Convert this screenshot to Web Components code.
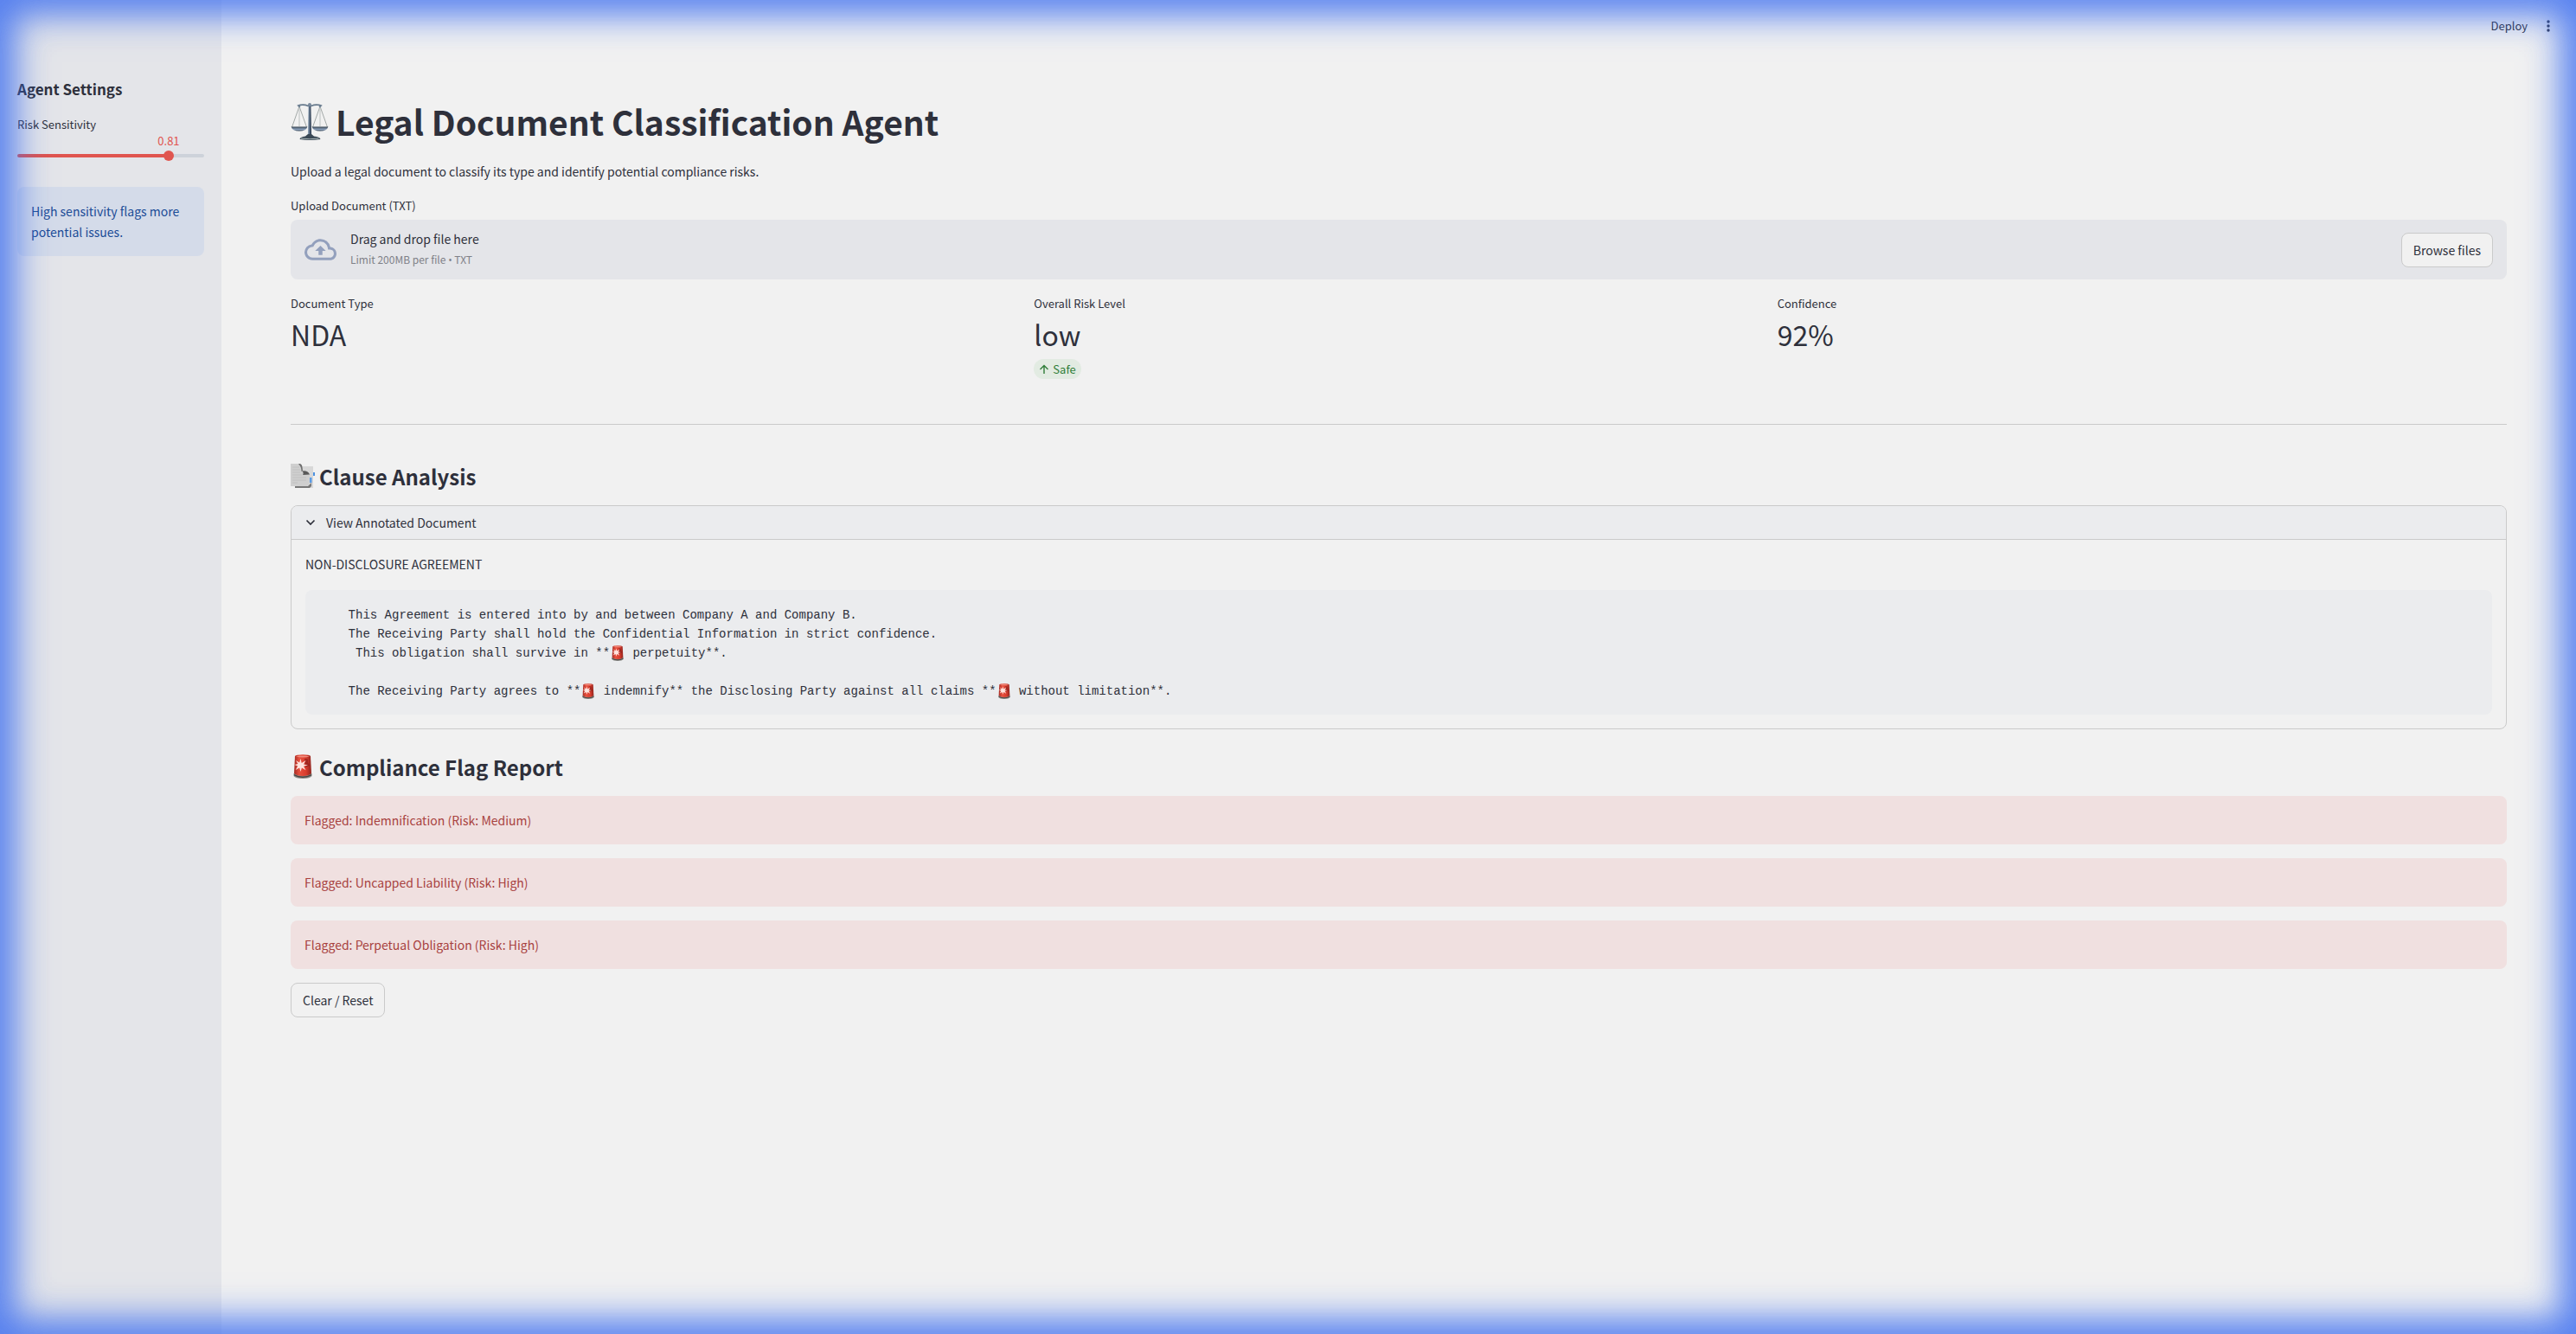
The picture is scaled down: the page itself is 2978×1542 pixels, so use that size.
<!DOCTYPE html>
<html lang="en">
<head>
<meta charset="utf-8">
<meta name="viewport" content="width=device-width, initial-scale=1">
<title>Legal Document Classification Agent</title>
<style>
  :root {
    --bg: #f1f1f1; --panel: #e4e5e9; --soft: #ebecee; --line: #cacaca;
    --ink: #2e303b; --muted: #7f8188; --red: #e0554f;
    --fs-small: 13px;
  }
  body { margin: 0; background: var(--bg); color: var(--ink);
    font: 14px/24px "Noto Sans CJK SC", "Noto Sans CJK JP", "Open Sans", sans-serif; }
  p { margin: 0 0 16px; }
</style>
</head>
<body>
<app-shell>
  <side-panel slot="side">
    <risk-slider label="Risk Sensitivity" value="0.81"></risk-slider>
    <alert-box kind="info">High sensitivity flags more potential issues.</alert-box>
  </side-panel>
  <tool-bar slot="tools"></tool-bar>
  <page-title>Legal Document Classification Agent</page-title>
  <p>Upload a legal document to classify its type and identify potential compliance risks.</p>
  <file-drop label="Upload Document (TXT)"></file-drop>
  <metric-row>
    <metric-card label="Document Type">NDA</metric-card>
    <metric-card label="Overall Risk Level" delta="Safe">low</metric-card>
    <metric-card label="Confidence">92%</metric-card>
  </metric-row>
  <section-title icon="pages">Clause Analysis</section-title>
  <clause-viewer label="View Annotated Document"></clause-viewer>
  <section-title icon="siren">Compliance Flag Report</section-title>
  <alert-list>
    <alert-box kind="error">Flagged: Indemnification (Risk: Medium)</alert-box>
    <alert-box kind="error">Flagged: Uncapped Liability (Risk: High)</alert-box>
    <alert-box kind="error">Flagged: Perpetual Obligation (Risk: High)</alert-box>
    <action-button>Clear / Reset</action-button>
  </alert-list>
</app-shell>

<script>
const define = (name, render) => customElements.define(name, class extends HTMLElement {
  connectedCallback() {
    if (this.shadowRoot) return;
    this.attachShadow({ mode: 'open' }).innerHTML = render(this);
  }
});

const PICTURES = {
  scales: `<svg viewBox="0 0 44 44" aria-hidden="true">
    <defs><linearGradient id="m" x1="0" x2="1"><stop offset="0" stop-color="#9fb2c4"/><stop offset=".5" stop-color="#50627a"/><stop offset="1" stop-color="#283546"/></linearGradient>
    <linearGradient id="p" x1="0" x2="0" y1="0" y2="1"><stop offset="0" stop-color="#34414f"/><stop offset=".6" stop-color="#8ba0bb"/><stop offset="1" stop-color="#3c4b5c"/></linearGradient></defs>
    <g fill="none" stroke="#9aa09f" stroke-width=".9"><path d="M10 5 1.500 29M10 5 18.500 29M34 5 25.500 29M34 5 42.500 29"/><path d="M10 5V28M34 5V28" stroke="#b7bcbc"/></g>
    <path d="M7.500 3.400Q15 1 20 3.500L22 2l2 1.500Q29 1 36.500 3.400L36 4.700Q29 3.200 24 5.200h-4Q15 3.200 8 4.700z" fill="#66798c"/>
    <circle cx="22" cy="3" r="2" fill="#7a8b9e"/><circle cx="10" cy="5" r="1.300" fill="#738596"/><circle cx="34" cy="5" r="1.300" fill="#738596"/>
    <path d="M20.600 5h2.800l.7 34h-4.200z" fill="url(#m)"/>
    <path d="M.6 28.500h18.800Q18 33.500 10 33.500T.6 28.500zM24.600 28.500h18.800Q42 33.500 34 33.500T24.600 28.500z" fill="url(#p)"/>
    <path d="M20 37h4l3 2.500q7 .5 7.500 3.500Q22 45 10.500 43q.5-3 6.500-3.500z" fill="#3a4855"/><path d="M12 42q10 1.500 20.500 0" stroke="#aab7b7" fill="none"/></svg>`,
  pages: `<svg viewBox="0 0 28 28" aria-hidden="true">
    <path d="M5 3h21v25H5z" fill="#d8d8d8"/><path d="M26 10h2v4h-2z" fill="#4d92e0"/><path d="M22 16h2.500v6H22z" fill="#5b9be4"/>
    <path d="M5 26h15l4-4v4l-2 2H5z" fill="#777"/>
    <path d="M0 0h11q2 1 2.500 5l.5 4q5-1 8 3v10l-3 4H0z" fill="#cfcfcf"/>
    <path d="M10 0q3 0 3.500 4l.5 4.500-1.500.5Q12.500 3 9 .5z" fill="#6f6f6f"/>
    <path d="M13.500 8.500q6-1 8.500 4-4 0-8 .5 1.500-2-.5-4.500z" fill="#595959"/>
    <path d="M2 4h8M2 7h9M2 10h9M2 13h11M2 16h16M2 19h16M2 22h6" stroke="#bdbdbd" stroke-width=".8"/></svg>`,
  siren: `<svg viewBox="0 0 22 28" aria-hidden="true">
    <defs><linearGradient id="s" x1="0" x2="1"><stop offset="0" stop-color="#a52b24"/><stop offset=".3" stop-color="#e8513f"/><stop offset=".7" stop-color="#d83c2d"/><stop offset="1" stop-color="#8f241e"/></linearGradient></defs>
    <path d="M.5 22h21v3q-2 3-10.500 3T.5 25z" fill="#8f8d88"/><path d="M1 23q10 5 20 0v1.500q-10 5-20 0z" fill="#4b4745"/>
    <path d="M2 2Q3 .2 11 .2T20 2l1 20q-3 3-10 3T1 22z" fill="url(#s)"/>
    <path d="M3 2.500Q11 .5 19 2.500 11 4.500 3 2.500z" fill="#ef8f80"/>
    <path d="M13 5q5-1 4 4l2 4-5 2z" fill="#8f1f1b" opacity=".7"/>
    <path d="m8.500 5 1.200 5 4.800-3-2.500 4.500 5 1-5 1.200 2.500 4.500-4.600-2.600L8.500 20l-1.300-4.500-4.400 2.400 2.400-4.300L1.500 12l4-1L3 7l4.200 2.600z" fill="#ffe4de"/></svg>`
};

define('app-shell', () => `<style>
  :host { display: grid; grid-template-columns: 256px minmax(0, 1fr); min-height: 100vh; }
  :host::after { content: ""; position: fixed; inset: 0; pointer-events: none; z-index: 9;
    box-shadow: inset 0 0 36px 16px rgba(60,110,240,.7), inset 0 0 60px rgba(60,110,240,.6); }
  main { padding: 32px 80px 80px; }
</style>
<slot name="side"></slot>
<div><slot name="tools"></slot><main><slot></slot></main></div>`);

define('side-panel', () => `<style>
  :host { display: block; background: var(--panel); padding: 87px 20px; }
  h2 { margin: 0 0 13px; font-size: 17px; line-height: 32px; font-weight: 600; }
</style>
<aside><h2>Agent Settings</h2><slot></slot></aside>`);

define('risk-slider', el => `<style>
  :host { display: block; margin-bottom: 34px; }
  label { display: block; font-size: var(--fs-small); }
  .scale { position: relative; height: 26px; display: flex; align-items: end; }
  output { position: absolute; left: 81%; top: 0; transform: translateX(-50%); font-size: var(--fs-small); line-height: 14px; color: var(--red); }
  .track { flex: 1; height: 4px; border-radius: 4px; display: flex; align-items: center;
    background: linear-gradient(to right, var(--red) 81%, #cdd2da 81%); }
  input { appearance: none; background: none; flex: none; width: calc(100% + 12px); height: 12px; margin: 0 -6px; }
  input::-webkit-slider-thumb { appearance: none; width: 12px; height: 12px; border-radius: 50%; background: var(--red); }
</style>
<label for="r">${el.getAttribute('label')}</label>
<div class="scale"><output for="r">${el.getAttribute('value')}</output>
<div class="track"><input id="r" type="range" min="0" max="1" step="0.01" value="${el.getAttribute('value')}"></div></div>`);

define('alert-box', () => `<style>
  :host { display: block; padding: 16px; border-radius: 8px; }
  :host([kind=info]) { background: #d4dbe9; color: #1b4c97; }
  :host([kind=error]) { background: #f0e0e0; color: #a8423f; }
</style><slot></slot>`);

define('tool-bar', () => `<style>
  :host { display: flex; justify-content: end; align-items: center; gap: 16px; height: 60px; padding-right: 24px; }
  button { border: 0; background: none; padding: 0; color: inherit; font: inherit; font-size: var(--fs-small); display: flex; }
  svg { width: 16px; height: 16px; }
</style>
<button>Deploy</button>
<button aria-label="Menu"><svg viewBox="0 0 16 16" fill="#2e303b"><circle cx="8" cy="3" r="1.700"/><circle cx="8" cy="8" r="1.700"/><circle cx="8" cy="13" r="1.700"/></svg></button>`);

define('page-title', () => `<style>
  :host { display: block; padding: 22px 0 20px; }
  h1 { margin: 0; display: flex; align-items: center; gap: 8px; font-size: 39px; line-height: 52px; font-weight: 700; }
  svg { width: 44px; height: 44px; }
</style><h1>${PICTURES.scales}<span><slot></slot></span></h1>`);

define('section-title', el => `<style>
  :host { display: block; padding: 16px 0 17px; }
  h2 { margin: 0; display: flex; align-items: center; gap: 5px; font-size: 24px; line-height: 32px; font-weight: 600; }
  .pic { width: 28px; height: 30px; display: flex; justify-content: center; }
  svg { height: 28px; }
</style><h2><span class="pic">${PICTURES[el.getAttribute('icon')]}</span><span><slot></slot></span></h2>`);

define('action-button', () => `<style>
  :host { display: inline-flex; }
  button { font: inherit; color: inherit; height: 40px; padding: 0 13px; border: 1px solid var(--line); border-radius: 8px; background: var(--bg); }
</style><button><slot></slot></button>`);

define('file-drop', el => `<style>
  :host { display: block; margin-bottom: 16px; }
  label { display: block; font-size: var(--fs-small); margin-bottom: 4px; }
  section { display: flex; align-items: center; background: var(--panel); border-radius: 8px; padding: 10px 16px; }
  svg { width: 37px; height: 37px; margin-right: 16px; }
  .text { flex: 1; }
  small { display: block; font-size: 12px; color: var(--muted); }
  small span { font-family: "Open Sans", sans-serif; }
  input { display: none; }
</style>
<label for="f">${el.getAttribute('label')}</label>
<section><input id="f" type="file" accept=".txt">
<svg viewBox="0 0 24 24" fill="#93a0bd" aria-hidden="true"><path d="M19.350 10.040A7.490 7.490 0 0 0 12 4C9.110 4 6.600 5.640 5.350 8.040A5.994 5.994 0 0 0 0 14c0 3.310 2.690 6 6 6h13c2.760 0 5-2.240 5-5 0-2.640-2.050-4.780-4.650-4.960zM19 18H6c-2.210 0-4-1.790-4-4 0-2.050 1.530-3.760 3.560-3.970l1.070-.11.5-.95A5.469 5.469 0 0 1 12 6c2.620 0 4.880 1.860 5.390 4.430l.3 1.500 1.530.11A2.980 2.980 0 0 1 22 15c0 1.650-1.350 3-3 3zM8 13h2.550v3h2.900v-3H16l-4-4z"/></svg>
<div class="text">Drag and drop file here<small>Limit 200MB per file <span>•</span> TXT</small></div>
<action-button>Browse files</action-button></section>`);

define('metric-row', () => `<style>
  :host { display: grid; grid-template-columns: repeat(3, minmax(0, 1fr)); gap: 16px; padding-bottom: 52px; border-bottom: 1px solid var(--line); margin-bottom: 28px; }
</style><slot></slot>`);

define('metric-card', el => `<style>
  :host { display: block; }
  .name { font-size: var(--fs-small); }
  .value { font-size: 32px; line-height: 46px; margin-bottom: 6px; }
  .delta { display: flex; width: fit-content; align-items: center; gap: 4px; background: #e2ebe2; color: #2f7d38; border-radius: 12px; padding: 0 6px; font-size: var(--fs-small); line-height: 23px; }
  svg { width: 12px; height: 12px; }
</style>
<div class="name">${el.getAttribute('label')}</div><div class="value"><slot></slot></div>
${el.hasAttribute('delta') ? `<div class="delta"><svg viewBox="0 0 12 12" fill="none" stroke="currentColor" stroke-width="1.400" aria-hidden="true"><path d="M6 11V1.500M1.500 6 6 1.500 10.500 6"/></svg>${el.getAttribute('delta')}</div>` : ''}`);

define('clause-viewer', el => `<style>
  :host { display: block; border: 1px solid var(--line); border-radius: 8px; overflow: hidden; margin-bottom: 12px; }
  summary { display: flex; align-items: center; gap: 12px; padding: 7px 16px; background: var(--soft); border-bottom: 1px solid var(--line); }
  summary svg { width: 12px; height: 12px; }
  .body { padding: 16px; }
  p { margin: 0 0 18px; }
  pre { margin: 0; padding: 18px 16px 16px; background: var(--soft); border-radius: 8px; font: 14px/22px "Liberation Mono", monospace; }
  pre div { display: flex; height: 22px; align-items: center; }
  pre svg { width: 14px; height: 18px; margin: 0 2px; }
</style>
<details open><summary><svg viewBox="0 0 12 12" fill="none" stroke="currentColor" stroke-width="1.700" aria-hidden="true"><path d="m1.500 3.500 4.500 4.500 4.500-4.500"/></svg>${el.getAttribute('label')}</summary>
<div class="body"><p>NON-DISCLOSURE AGREEMENT</p>
<pre>${[
  ['    This Agreement is entered into by and between Company A and Company B.'],
  ['    The Receiving Party shall hold the Confidential Information in strict confidence.'],
  ['     This obligation shall survive in **', ' perpetuity**.'],
  [''],
  ['    The Receiving Party agrees to **', ' indemnify** the Disclosing Party against all claims **', ' without limitation**.']
].map(parts => `<div>${parts.map(t => `<span>${t}</span>`).join(PICTURES.siren)}</div>`).join('')}</pre></div></details>`);

define('alert-list', () => `<style>
  :host { display: flex; flex-direction: column; align-items: stretch; gap: 16px; }
</style><slot></slot>`);
</script>
</body>
</html>
